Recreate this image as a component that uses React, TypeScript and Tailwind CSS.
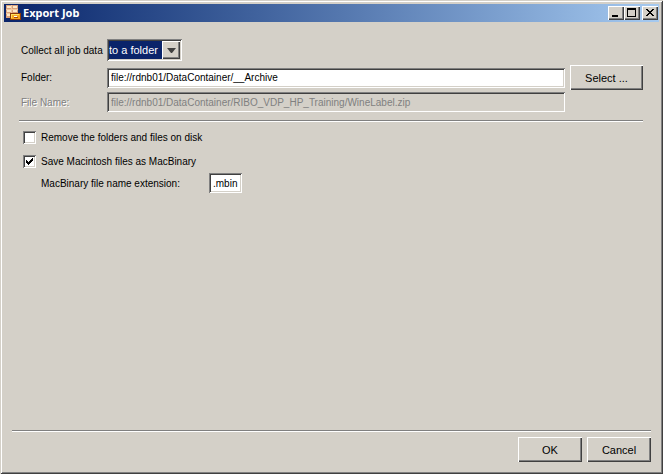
import type { ButtonHTMLAttributes, InputHTMLAttributes } from 'react';
import clsx from 'clsx';

const RAISED =
  'bg-[#d4d0c8] shadow-[inset_1px_1px_#ffffff,inset_-1px_-1px_#404040,inset_-2px_-2px_#808080]';
const SUNKEN =
  'shadow-[inset_1px_1px_#808080,inset_-1px_-1px_#ffffff,inset_2px_2px_#404040,inset_-2px_-2px_#d4d0c8]';

function PushButton({ className, ...props }: ButtonHTMLAttributes<HTMLButtonElement>) {
  return (
    <button type="button" className={clsx('h-[25px] pt-[2px] text-center text-[11px]', RAISED, className)} {...props} />
  );
}

function TextField({ className, ...props }: InputHTMLAttributes<HTMLInputElement>) {
  return <input type="text" className={clsx('h-5 min-w-0 px-1 outline-none', SUNKEN, className)} {...props} />;
}

function Separator() {
  return <hr className="h-[2px] border-t border-b border-t-[#808080] border-b-white" />;
}

function CheckBox({ id, label, defaultChecked }: { id: string; label: string; defaultChecked?: boolean }) {
  return (
    <div className="flex h-[13px] items-center gap-[5px]">
      <span className="relative h-[13px] w-[13px]">
        <input
          id={id}
          type="checkbox"
          defaultChecked={defaultChecked}
          className={clsx('peer block h-[13px] w-[13px] appearance-none bg-white', SUNKEN)}
        />
        <svg
          viewBox="0 0 13 13"
          shapeRendering="crispEdges"
          className="pointer-events-none absolute inset-0 hidden h-[13px] w-[13px] peer-checked:block"
        >
          <path d="M3 5h1v3h-1zM4 6h1v3h-1zM5 7h1v3h-1zM6 6h1v3h-1zM7 5h1v3h-1zM8 4h1v3h-1zM9 3h1v3h-1z" />
        </svg>
      </span>
      <label htmlFor={id}>{label}</label>
    </div>
  );
}

function AppIcon() {
  return (
    <svg viewBox="0 0 16 16" shapeRendering="crispEdges" className="h-4 w-4">
      <path fill="#d9a07c" d="M0 0h12v13H0z" />
      <path fill="#fbe8c8" d="M1 1h4v2H1zM7 1h4v2H7zM1 5h4v2H1zM7 5h4v2H7zM1 9h3v2H1z" />
      <path fill="#f0c8a0" d="M5 0h1v13H5zM0 4h12v1H0zM0 8h12v1H0z" />
      <path fill="#8c3a08" d="M4 8h11v7H4z" />
      <path fill="#f8a820" d="M5 9h9v5H5z" />
      <path fill="#ffe060" d="M5 9h8v1H5zM5 10h1v3H5z" />
      <path fill="#ffffff" d="M8 11h3v1H8z" />
      <path fill="#a84808" d="M8 12h4v1H8z" />
    </svg>
  );
}

function TitleBar() {
  return (
    <header className="flex h-[18px] items-center bg-linear-to-r from-[#0a246a] to-[#a6caf0] pr-px pl-[2px]">
      <AppIcon />
      <h1 className="ml-px flex-1 font-['Noto_Sans',sans-serif] text-[11px] leading-[18px] font-bold text-white">
        Export Job
      </h1>
      <button type="button" aria-label="Minimize" className={clsx('h-[14px] w-4', RAISED)}>
        <svg viewBox="0 0 16 14" shapeRendering="crispEdges" className="h-[14px] w-4">
          <path d="M4 9h6v2H4z" />
        </svg>
      </button>
      <button type="button" aria-label="Maximize" className={clsx('h-[14px] w-4', RAISED)}>
        <svg viewBox="0 0 16 14" shapeRendering="crispEdges" className="h-[14px] w-4">
          <path fillRule="evenodd" d="M3 2h9v9H3zM4 4v6h7V4z" />
        </svg>
      </button>
      <button type="button" aria-label="Close" className={clsx('ml-[2px] h-[14px] w-4', RAISED)}>
        <svg viewBox="0 0 16 14" shapeRendering="crispEdges" className="h-[14px] w-4">
          <path d="M4 3h2v1H4zM10 3h2v1h-2zM5 4h2v1H5zM9 4h2v1H9zM6 5h4v1H6zM7 6h2v1H7zM6 7h4v1H6zM5 8h2v1H5zM9 8h2v1H9zM4 9h2v1H4zM10 9h2v1h-2z" />
        </svg>
      </button>
    </header>
  );
}

export default function App() {
  return (
    <div className="flex min-h-screen flex-col bg-[#d4d0c8] p-1 font-['Liberation_Sans',Arial,sans-serif] text-[10px] leading-[13px] text-black shadow-[inset_1px_1px_#d4d0c8,inset_-1px_-1px_#404040,inset_2px_2px_#ffffff,inset_-2px_-2px_#808080]">
      <TitleBar />

      <main className="flex-1 pt-[17px] pr-4 pl-[15px]">
        <div className="flex items-center pl-[2px]">
          <label htmlFor="target" className="w-[86px] whitespace-nowrap">
            Collect all job data
          </label>
          <div className={clsx('relative h-[22px] w-[75px] p-[2px]', SUNKEN)}>
            <select
              id="target"
              className="block h-[18px] w-full appearance-none bg-[#0a246a] text-[11px] text-white outline-none"
            >
              <option>to a folder</option>
              <option>to a ZIP file</option>
            </select>
            <span
              className={clsx(
                'pointer-events-none absolute top-[2px] right-[2px] flex h-[18px] w-[18px] items-center justify-center',
                RAISED,
              )}
            >
              <svg viewBox="0 0 9 5" className="h-[5px] w-[9px]">
                <path fill="#404040" d="M0 0h9L5 5H4z" />
              </svg>
            </span>
          </div>
        </div>

        <div className="mt-1 flex items-center pl-[2px]">
          <label htmlFor="folder" className="w-[86px]">
            Folder:
          </label>
          <TextField id="folder" defaultValue="file://rdnb01/DataContainer/__Archive" className="flex-1 bg-white" />
          <PushButton className="ml-[5px] w-[73px]">Select ...</PushButton>
        </div>

        <div className="mt-[2px] flex items-center pr-[78px] pl-[2px]">
          <label htmlFor="filename" className="w-[86px] text-[#808080] [text-shadow:1px_1px_#ffffff]">
            File Name:
          </label>
          <TextField
            id="filename"
            disabled
            defaultValue="file://rdnb01/DataContainer/RIBO_VDP_HP_Training/WineLabel.zip"
            className="flex-1 text-[#808080]"
          />
        </div>

        <div className="mt-2">
          <Separator />
        </div>

        <div className="mt-[9px] flex flex-col gap-[11px] pl-1">
          <CheckBox id="remove" label="Remove the folders and files on disk" />
          <CheckBox id="macbinary" label="Save Macintosh files as MacBinary" defaultChecked />
        </div>
        <div className="mt-[5px] flex items-center pl-[22px]">
          <label htmlFor="extension" className="w-[168px]">
            MacBinary file name extension:
          </label>
          <TextField id="extension" defaultValue=".mbin" className="w-[33px] bg-white" />
        </div>
      </main>

      <footer className="px-2 pb-2">
        <Separator />
        <div className="mt-[5px] flex justify-end gap-[5px]">
          <PushButton className="w-16">OK</PushButton>
          <PushButton className="w-16">Cancel</PushButton>
        </div>
      </footer>
    </div>
  );
}
